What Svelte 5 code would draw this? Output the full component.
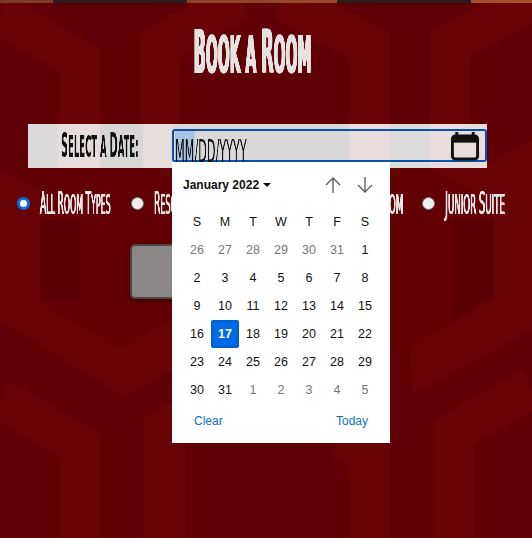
<script>
    const headers = ['S', 'M', 'T', 'W', 'T', 'F', 'S'];

    // six rows of january 2022, the first and last ones spill into the next months
    let days = [];
    for (let d = 26; d <= 31; d++) days.push({ n: d, muted: true });
    for (let d = 1; d <= 31; d++) days.push({ n: d, muted: false });
    for (let d = 1; d <= 5; d++) days.push({ n: d, muted: true });

    const roomTypes = [
        { words: ['All', 'Room', 'Types'], width: 72, scale: 0.325, checked: true },
        { words: ['Resort'], width: 179, scale: 0.33 },
        { words: ['Room'], width: 28, scale: 0.36 },
        { words: ['Junior', 'Suite'], width: 61, scale: 0.357 }
    ];

    // carpet shapes, they are the picture's background and not layout
    const bands = [
        '80,168 80,60 0,14',
        '160,168 160,45 240,0',
        '369,168 369,45 283,0',
        '450,170 450,45 532,0',
        '369,538 369,455 340,438',
        '0,399 80,445 80,538',
        '164,538 164,430 240,386',
        '453,538 453,432 532,388'
    ];
    const mids = [
        '40,168 172,168 172,320 120,348 40,303',
        '390,168 430,168 493,200 493,300 410,347 390,340'
    ];
    const blocks = [
        '430,168 493,200 493,300 410,347 412,395 532,330 532,140 488,163',
        '0,170 40,190 40,303 120,348 172,320 172,370 123,397 0,320'
    ];
    const shade = [
        '40,220 80,220 80,300 40,300',
        '453,220 493,220 493,296 453,320'
    ];
</script>

<svg class="carpet" viewBox="0 0 532 538" aria-hidden="true">
    {#each bands as points}
        <polyline {points} />
    {/each}
    {#each mids as points}
        <polygon class="mid" {points} />
    {/each}
    {#each blocks as points}
        <polygon class="block" {points} />
    {/each}
    {#each shade as points}
        <polygon class="shade" {points} />
    {/each}
</svg>

{#snippet caps(words)}
    {#each words as word, i}{i > 0 ? ' ' : ''}<span class:big={word.length > 1}>{word[0]}</span>{word.slice(1)}{/each}
{/snippet}

<div class="top-strip">
    <span class="lamp"></span>
    <span class="lamp"></span>
</div>

<main class="page">
    <h1 class="title">{@render caps(['Book', 'a', 'Room'])}</h1>

    <div class="date-bar">
        <label class="date-label" for="date">{@render caps(['Select', 'a', 'Date:'])}</label>

        <div class="date-input" id="date">
            <span class="date-text"><span class="selected">mm</span>/dd/yyyy</span>

            <svg class="cal-icon" viewBox="0 0 30 30" aria-hidden="true">
                <rect x="2" y="4" width="26" height="24" rx="3" fill="none" stroke="#111" stroke-width="3" />
                <rect x="2" y="4" width="26" height="7" fill="#111" />
                <rect x="5" y="0" width="3" height="5" fill="#111" />
                <rect x="22" y="0" width="3" height="5" fill="#111" />
            </svg>

            <div class="calendar">
                <div class="cal-head">
                    <span class="month">January 2022</span>
                    <span class="caret"></span>
                    <div class="arrows">
                        <svg viewBox="0 0 18 18" aria-hidden="true"><path d="M9 17V2M2 9l7-7 7 7" /></svg>
                        <svg viewBox="0 0 18 18" aria-hidden="true"><path d="M9 1v15M2 9l7 7 7-7" /></svg>
                    </div>
                </div>

                <div class="grid">
                    {#each headers as h}
                        <div class="cell">{h}</div>
                    {/each}
                    {#each days as day}
                        <div class="cell" class:muted={day.muted} class:today={!day.muted && day.n === 17}>{day.n}</div>
                    {/each}
                </div>

                <div class="cal-foot">
                    <span>Clear</span>
                    <span>Today</span>
                </div>
            </div>
        </div>
    </div>

    <div class="radios">
        {#each roomTypes as room}
            <div class="radio-item">
                <span class="radio" class:checked={room.checked}></span>
                <span class="radio-box" style="width: {room.width}px">
                    <span class="radio-label" style="transform: scaleX({room.scale})">{@render caps(room.words)}</span>
                </span>
            </div>
        {/each}
    </div>

    <button class="search" aria-label="Search rooms"></button>
</main>

<style>
    :global(body) {
        margin: 0;
        background-color: #5e0005;
    }

    .carpet {
        position: absolute;
        top: 0;
        left: 0;
        width: 532px;
        height: 538px;
        z-index: -1;
    }

    .carpet polyline {
        fill: none;
        stroke: #680406;
        stroke-width: 41;
    }

    .carpet .mid {
        fill: #620205;
    }

    .carpet .block {
        fill: #680406;
    }

    .carpet .shade {
        fill: #5a0005;
    }

    .top-strip {
        height: 3px;
        display: flex;
        gap: 150px;
        padding-left: 53px;
        background: linear-gradient(90deg, #7a3b26, #a8512e);
    }

    .lamp {
        width: 134px;
        background-color: #2a1f1c;
    }

    .page {
        width: 505px;
        min-height: 535px;
        font-family: "DejaVu Sans Condensed", "DejaVu Sans", sans-serif;
    }

    .title {
        margin: 23px 0 0;
        height: 52px;
        line-height: 52px;
        text-align: center;
        font-size: 52px;
        font-weight: 700;
        text-transform: uppercase;
        color: #e6e2e2;
        transform: scaleX(0.3);
        will-change: transform;
        white-space: nowrap;
        text-shadow: 2px 0 0 #e6e2e2, -2px 0 0 #e6e2e2;
    }

    .big {
        font-size: 1.15em;
    }

    .date-bar {
        margin: 46px 0 0 28px;
        width: 459px;
        height: 44px;
        box-sizing: border-box;
        padding: 5px 0 0 33px;
        display: flex;
        background: linear-gradient(90deg,
            #dcd9d9 30px, #e6dcdc 30px, #e6dcdc 72px,
            #d9d6d6 72px, #d9d6d6 115px, #e6dcdc 115px, #e6dcdc 144px,
            #d9d7d7 144px, #d9d7d7 321px, #e8dcdc 321px, #e8dcdc 362px,
            #dcdada 362px, #dcdada 402px, #e8dcdc 402px);
    }

    .date-label {
        width: 111px;
        flex: none;
        font-size: 30px;
        line-height: 33px;
        font-weight: 700;
        text-transform: uppercase;
        color: #111;
        white-space: nowrap;
        transform: scaleX(0.315);
        transform-origin: left;
        will-change: transform;
    }

    .date-input {
        position: relative;
        flex: none;
        width: 315px;
        height: 33px;
        box-sizing: border-box;
        border: 2px solid #0a52a8;
        border-radius: 3px;
        font-size: 32px;
        color: #111;
    }

    .date-text {
        display: block;
        height: 29px;
        margin-left: 1px;
        line-height: 41px;
        text-transform: uppercase;
        white-space: nowrap;
        transform: scaleX(0.39);
        transform-origin: left;
        will-change: transform;
    }

    .selected {
        display: inline-block;
        height: 29px;
        line-height: 41px;
        background-color: #a8c4e4;
    }

    .cal-icon {
        position: absolute;
        top: 1px;
        right: 5px;
        width: 30px;
        height: 29px;
    }

    .calendar {
        position: absolute;
        top: 31px;
        left: -2px;
        width: 218px;
        height: 281px;
        box-sizing: border-box;
        background-color: #fff;
        font-family: "Liberation Sans", Arial, sans-serif;
        font-size: 12.5px;
        line-height: 14px;
        color: #111;
        z-index: 2;
    }

    .cal-head {
        display: flex;
        align-items: center;
        height: 46px;
        padding-left: 11px;
    }

    .month {
        font-weight: 700;
        font-size: 12px;
        line-height: 46px;
    }

    .caret {
        margin-left: 4px;
        border-top: 4px solid #111;
        border-left: 4px solid transparent;
        border-right: 4px solid transparent;
    }

    .arrows {
        margin-left: auto;
        margin-right: 16px;
        display: flex;
        gap: 14px;
    }

    .arrows svg {
        width: 18px;
        height: 18px;
        fill: none;
        stroke: #5f5f5f;
        stroke-width: 1.4;
    }

    .grid {
        display: grid;
        grid-template-columns: repeat(7, 28px);
        grid-auto-rows: 28px;
        padding: 0 11px;
    }

    .cell {
        display: flex;
        align-items: center;
        justify-content: center;
        line-height: 28px;
    }

    .muted {
        color: #767676;
    }

    .today {
        box-sizing: border-box;
        background-color: #0069e8;
        border: 2px solid #005fd0;
        border-radius: 2px;
        color: #fff;
        font-weight: 700;
    }

    .cal-foot {
        display: flex;
        justify-content: space-between;
        padding: 10px 22px 0;
        font-size: 12px;
        color: #0b72c4;
    }

    .radios {
        margin: 24px 0 0 17px;
        height: 22px;
        display: flex;
        gap: 19px;
    }

    .radio-item {
        display: flex;
        align-items: center;
        gap: 10px;
    }

    .radio {
        width: 13px;
        height: 13px;
        flex: none;
        box-sizing: border-box;
        border-radius: 50%;
        background-color: #efefef;
        border: 1px solid #767676;
    }

    .radio.checked {
        background-color: #fff;
        border: 3px solid #0a6ce8;
    }

    .radio-box {
        display: block;
        height: 22px;
    }

    .radio-label {
        display: block;
        font-size: 27px;
        line-height: 22px;
        text-transform: uppercase;
        color: #ece6e6;
        white-space: nowrap;
        transform-origin: left;
        will-change: transform;
        text-shadow: 1px 0 0 #ece6e6, -1px 0 0 #ece6e6;
    }

    .search {
        display: block;
        margin: 30px 0 0 130px;
        width: 244px;
        height: 55px;
        box-sizing: border-box;
        background-color: #8c8787;
        border: 2px solid #4d4747;
        border-radius: 5px;
        box-shadow: 0 2px 6px rgba(0, 0, 0, 0.35);
    }
</style>
